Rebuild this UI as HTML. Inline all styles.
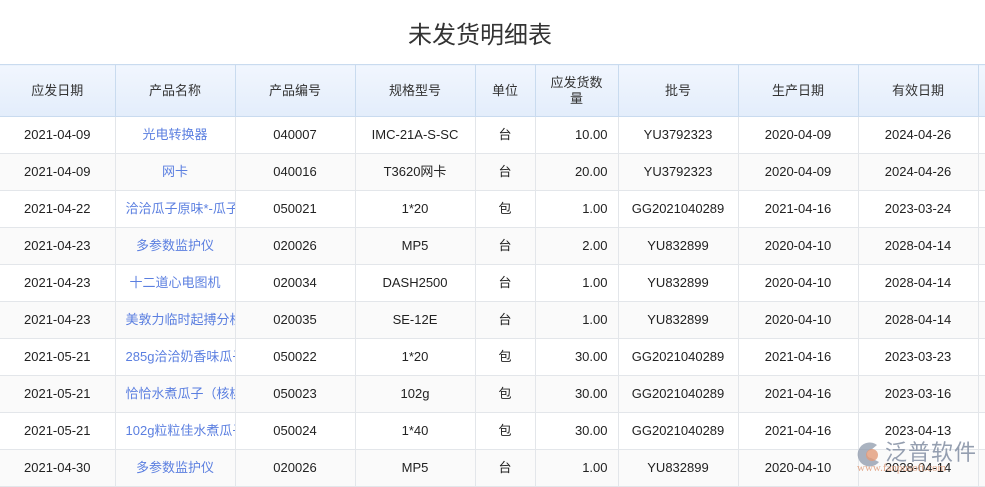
<!DOCTYPE html>
<html><head><meta charset="utf-8"><style>
body{margin:0;width:985px;height:487px;overflow:hidden;background:#fff;font-family:"Liberation Sans","Noto Sans CJK SC",sans-serif;}
.title{position:absolute;top:18px;left:0;width:960px;text-align:center;font-size:24px;line-height:36px;color:#333;}
table{position:absolute;top:64px;left:0;width:998px;border-collapse:collapse;table-layout:fixed;font-size:13px;color:#222;}
th{height:51px;padding:0;font-weight:normal;background:linear-gradient(#f1f6fe,#e3edfb);border:1px solid #c9dbef;color:#333;line-height:16px;}
td{height:36px;padding:0;line-height:16px;text-align:center;border:1px solid #e3e6ea;white-space:nowrap;overflow:hidden;}
tr:nth-child(odd) td{background:#fafafa;}
td.l{color:#5b7fe0;padding:0 10px;text-overflow:clip;}
td.n{text-align:right;padding-right:10px}
th:first-child,td:first-child{border-left:none}
.logo{position:absolute;left:855px;top:440px;opacity:.9}
</style></head><body>
<div class="title">未发货明细表</div>
<table>
<colgroup><col style="width:115px"><col style="width:120px"><col style="width:120px"><col style="width:120px"><col style="width:60px"><col style="width:83px"><col style="width:120px"><col style="width:120px"><col style="width:120px"><col style="width:20px"></colgroup>
<tr><th>应发日期</th><th>产品名称</th><th>产品编号</th><th>规格型号</th><th>单位</th><th>应发货数<br>量</th><th>批号</th><th>生产日期</th><th>有效日期</th><th></th></tr>
<tr><td>2021-04-09</td><td class="l">光电转换器</td><td>040007</td><td>IMC-21A-S-SC</td><td>台</td><td class="n">10.00</td><td>YU3792323</td><td>2020-04-09</td><td>2024-04-26</td><td></td></tr>
<tr><td>2021-04-09</td><td class="l">网卡</td><td>040016</td><td>T3620网卡</td><td>台</td><td class="n">20.00</td><td>YU3792323</td><td>2020-04-09</td><td>2024-04-26</td><td></td></tr>
<tr><td>2021-04-22</td><td class="l">洽洽瓜子原味*-瓜子</td><td>050021</td><td>1*20</td><td>包</td><td class="n">1.00</td><td>GG2021040289</td><td>2021-04-16</td><td>2023-03-24</td><td></td></tr>
<tr><td>2021-04-23</td><td class="l">多参数监护仪</td><td>020026</td><td>MP5</td><td>台</td><td class="n">2.00</td><td>YU832899</td><td>2020-04-10</td><td>2028-04-14</td><td></td></tr>
<tr><td>2021-04-23</td><td class="l">十二道心电图机</td><td>020034</td><td>DASH2500</td><td>台</td><td class="n">1.00</td><td>YU832899</td><td>2020-04-10</td><td>2028-04-14</td><td></td></tr>
<tr><td>2021-04-23</td><td class="l">美敦力临时起搏分析</td><td>020035</td><td>SE-12E</td><td>台</td><td class="n">1.00</td><td>YU832899</td><td>2020-04-10</td><td>2028-04-14</td><td></td></tr>
<tr><td>2021-05-21</td><td class="l">285g洽洽奶香味瓜子</td><td>050022</td><td>1*20</td><td>包</td><td class="n">30.00</td><td>GG2021040289</td><td>2021-04-16</td><td>2023-03-23</td><td></td></tr>
<tr><td>2021-05-21</td><td class="l">恰恰水煮瓜子（核桃</td><td>050023</td><td>102g</td><td>包</td><td class="n">30.00</td><td>GG2021040289</td><td>2021-04-16</td><td>2023-03-16</td><td></td></tr>
<tr><td>2021-05-21</td><td class="l">102g粒粒佳水煮瓜子</td><td>050024</td><td>1*40</td><td>包</td><td class="n">30.00</td><td>GG2021040289</td><td>2021-04-16</td><td>2023-04-13</td><td></td></tr>
<tr><td>2021-04-30</td><td class="l">多参数监护仪</td><td>020026</td><td>MP5</td><td>台</td><td class="n">1.00</td><td>YU832899</td><td>2020-04-10</td><td>2028-04-14</td><td></td></tr>
</table>
<div class="logo">
<svg width="30" height="30" style="position:absolute;left:0;top:0"><path d="M22 5 A12 12 0 1 0 24 22 L16 18 A4 4 0 1 1 16 10 Z" fill="#8a95a8" opacity=".8"/><circle cx="17" cy="15" r="6" fill="#e0906a" opacity=".8"/></svg>
<div style="position:absolute;left:30px;top:0px;font-size:22px;line-height:26px;color:#8a95a8;white-space:nowrap;letter-spacing:1px">泛普软件</div>
<div style="position:absolute;left:2px;top:22px;font-size:11px;color:#e0a080;white-space:nowrap;font-family:'Liberation Serif',serif">www.fanpusoft.com</div>
</div>
</body></html>
